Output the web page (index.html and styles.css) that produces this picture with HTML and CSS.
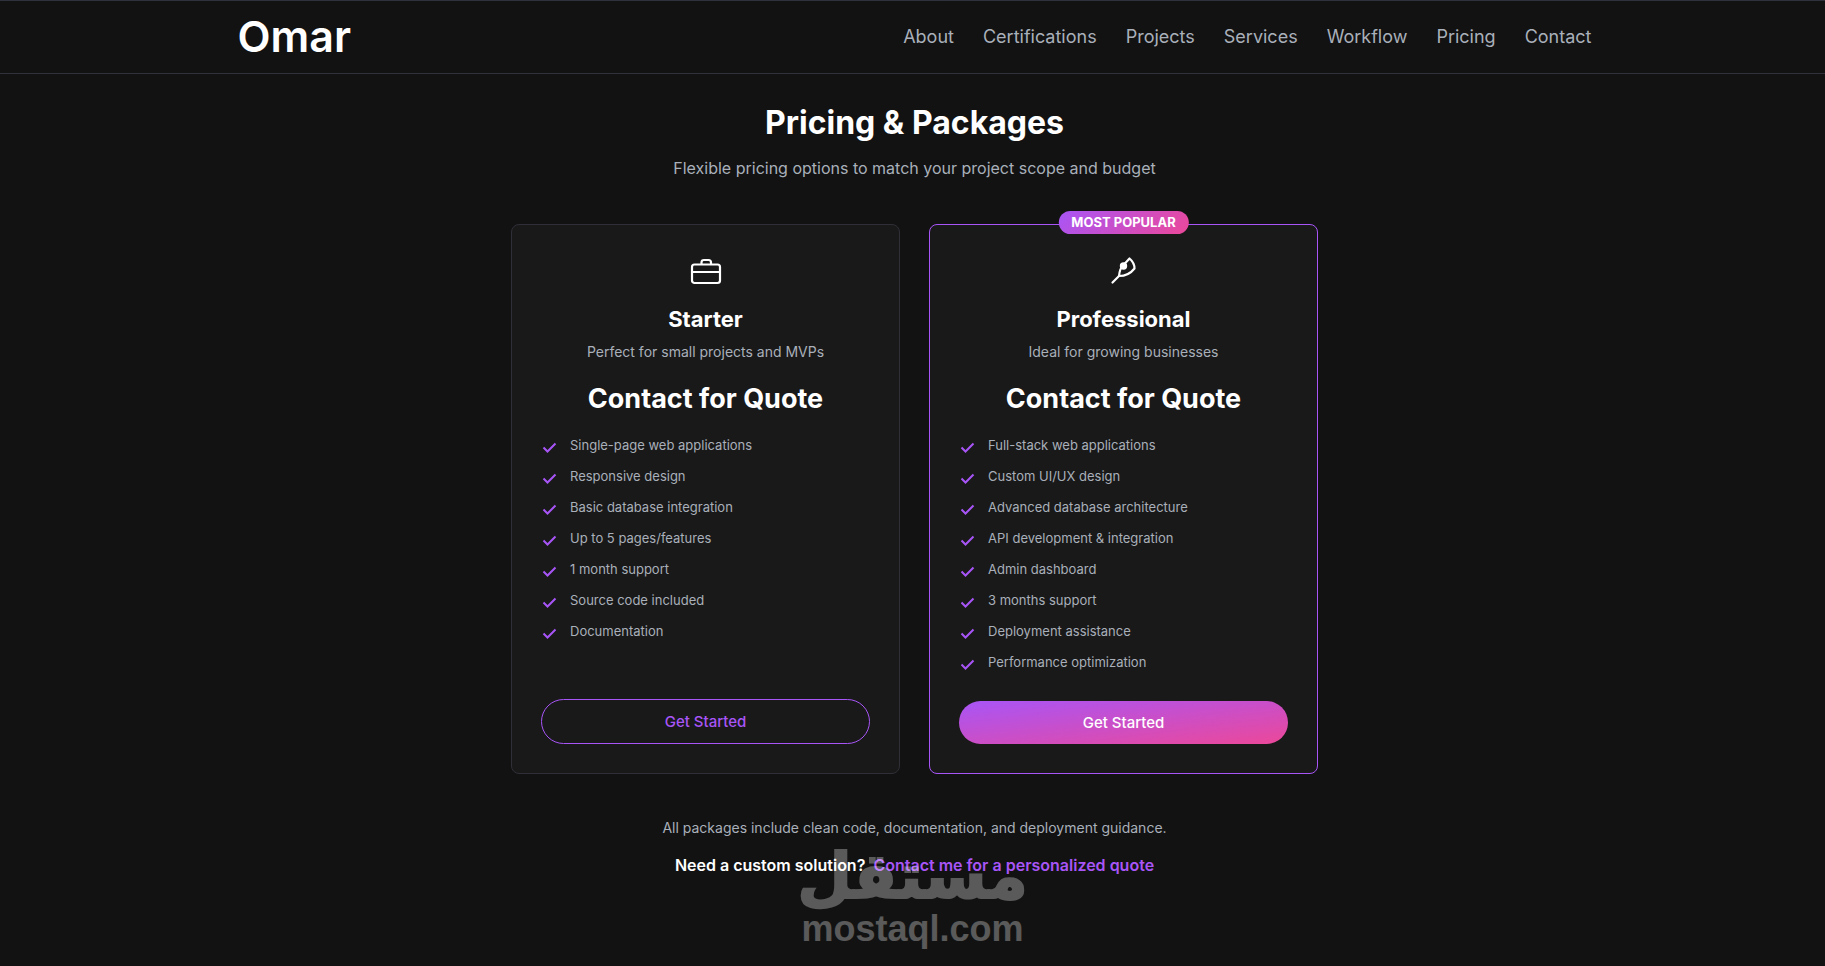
FILE: index.html
```
<!DOCTYPE html>
<html lang="en">
<head>
    <meta charset="UTF-8">
    <meta name="viewport" content="width=device-width, initial-scale=1.0">
    <title>Omar - Pricing</title>
    <link rel="stylesheet" href="styles.css">
</head>
<body>

<svg class="sprite" aria-hidden="true">
    <symbol id="check" viewBox="0 0 18 18">
        <path d="M2.500 9.500 L6.500 13.500 L14.500 5.500" fill="none" stroke="currentColor" stroke-width="2"/>
    </symbol>
</svg>

<header>
    <div class="container">
        <a class="logo" href="#home">Omar</a>
        <nav>
            <a href="#about">About</a>
            <a href="#certifications">Certifications</a>
            <a href="#projects">Projects</a>
            <a href="#services">Services</a>
            <a href="#workflow">Workflow</a>
            <a href="#pricing">Pricing</a>
            <a href="#contact">Contact</a>
        </nav>
    </div>
</header>

<main class="pricing" id="pricing">
    <h2>Pricing &amp; Packages</h2>
    <p class="subtitle">Flexible pricing options to match your project scope and budget</p>

    <div class="cards">
        <div class="card">
            <svg class="icon" viewBox="0 0 34 34" aria-hidden="true">
                <rect x="3" y="10.500" width="28" height="18.500" rx="2.500"/>
                <path d="M3 18H31M12.500 10V8.500Q12.500 6 15 6H19.500Q22 6 22 8.500V10"/>
            </svg>
            <h3>Starter</h3>
            <p class="desc">Perfect for small projects and MVPs</p>
            <div class="price">Contact for Quote</div>
            <ul class="features">
                <li><svg><use href="#check"/></svg>Single-page web applications</li>
                <li><svg><use href="#check"/></svg>Responsive design</li>
                <li><svg><use href="#check"/></svg>Basic database integration</li>
                <li><svg><use href="#check"/></svg>Up to 5 pages/features</li>
                <li><svg><use href="#check"/></svg>1 month support</li>
                <li><svg><use href="#check"/></svg>Source code included</li>
                <li><svg><use href="#check"/></svg>Documentation</li>
            </ul>
            <button class="btn btn-outline" type="button">Get Started</button>
        </div>

        <div class="card popular">
            <span class="badge">MOST POPULAR</span>
            <svg class="icon" viewBox="0 0 34 34" aria-hidden="true">
                <path d="M5.500 28.500L12 22C12.500 17 14 13 16.500 11L22.500 4.500C25.500 7 27.500 11 27.500 14.500C24 19 19 22 12 22"/>
                <circle class="dot" cx="16.500" cy="12" r="2.600"/>
            </svg>
            <h3>Professional</h3>
            <p class="desc">Ideal for growing businesses</p>
            <div class="price">Contact for Quote</div>
            <ul class="features">
                <li><svg><use href="#check"/></svg>Full-stack web applications</li>
                <li><svg><use href="#check"/></svg>Custom UI/UX design</li>
                <li><svg><use href="#check"/></svg>Advanced database architecture</li>
                <li><svg><use href="#check"/></svg>API development &amp; integration</li>
                <li><svg><use href="#check"/></svg>Admin dashboard</li>
                <li><svg><use href="#check"/></svg>3 months support</li>
                <li><svg><use href="#check"/></svg>Deployment assistance</li>
                <li><svg><use href="#check"/></svg>Performance optimization</li>
            </ul>
            <button class="btn btn-fill" type="button">Get Started</button>
        </div>
    </div>

    <p class="note">All packages include clean code, documentation, and deployment guidance.</p>
    <p class="custom">Need a custom solution? <a href="#contact">Contact me for a personalized quote</a></p>
</main>

<div class="watermark">
    <span class="watermark-ar" lang="ar" dir="rtl">مستقل</span>
    <span class="watermark-en">mostaql.com</span>
</div>

</body>
</html>
```
FILE: styles.css
```
* {
    box-sizing: border-box;
}
body {
    font-family: 'Inter', sans-serif;
    margin: 0;
    min-height: 100vh;
    position: relative;
    background-color: #121212;
    color: #fff;
}
h2, h3, p, ul {
    margin: 0;
    padding: 0;
}
a {
    text-decoration: none;
}
.sprite {
    display: none;
}

/* Header */
header {
    border-top: 1px solid #2f323c;
    border-bottom: 1px solid #2f323c;
    padding-left: 4px;
}
.container {
    max-width: 1400px;
    margin: 0 auto;
    padding: 0 23px 2px;
    height: 72px;
    display: flex;
    align-items: center;
    justify-content: space-between;
}
.logo {
    color: #fff;
    font-size: 43px;
    font-weight: 600;
}
nav {
    display: flex;
    gap: 29px;
}
nav a {
    color: #a9b0ba;
    font-size: 18px;
}
nav a:hover {
    color: #fff;
}

/* Pricing */
.pricing {
    padding: 29px 0 80px 4px;
    text-align: center;
}
.pricing h2 {
    font-size: 32px;
    line-height: 40px;
    font-weight: 700;
}
.subtitle {
    margin-top: 13px;
    font-size: 16px;
    line-height: 24px;
    color: #a9b0ba;
}
.cards {
    display: grid;
    grid-template-columns: 1fr 1fr;
    gap: 29px;
    max-width: 807px;
    margin: 44px auto 0;
}
.card {
    position: relative;
    display: flex;
    flex-direction: column;
    align-items: center;
    padding: 29px;
    background-color: #191919;
    border: 1px solid #2f2f38;
    border-radius: 8px;
}
.popular {
    border-color: #a855f7;
}
.badge {
    position: absolute;
    top: -14px;
    left: 50%;
    transform: translateX(-50%);
    padding: 0 13px;
    border-radius: 12px;
    background: linear-gradient(135deg, #a855f7, #ec4899);
    font-size: 13px;
    line-height: 23px;
    font-weight: 700;
    white-space: nowrap;
}
.icon {
    width: 34px;
    height: 34px;
    fill: none;
    stroke: #fff;
    stroke-width: 2.2;
    stroke-linecap: round;
    stroke-linejoin: round;
}
.icon .dot {
    fill: #fff;
}
.card h3 {
    margin-top: 17px;
    font-size: 22px;
    line-height: 28px;
    font-weight: 700;
}
.desc {
    margin-top: 8px;
    font-size: 14px;
    line-height: 22px;
    color: #a9b0ba;
}
.price {
    margin-top: 18px;
    font-size: 27px;
    line-height: 36px;
    font-weight: 700;
}
.features {
    align-self: stretch;
    display: flex;
    flex-direction: column;
    gap: 10px;
    margin: 18px 0 28px;
    list-style: none;
    text-align: left;
}
.features li {
    display: flex;
    gap: 11px;
    font-size: 13px;
    line-height: 21px;
    color: #a9b0ba;
}
.features svg {
    width: 18px;
    height: 18px;
    margin-top: 3px;
    color: #a855f7;
}
.btn {
    width: 100%;
    margin-top: auto;
    padding: 13px;
    border: none;
    border-radius: 24px;
    font-family: inherit;
    font-size: 15px;
    line-height: 17px;
    font-weight: 500;
    cursor: pointer;
}
.btn-outline {
    background: transparent;
    border: 1px solid #a855f7;
    color: #a855f7;
}
.btn-fill {
    background: linear-gradient(to bottom right, #a855f7, #ec4899);
    color: #fff;
}
.note {
    margin-top: 43px;
    font-size: 14px;
    line-height: 22px;
    color: #a9b0ba;
}
.custom {
    margin-top: 14px;
    font-size: 16px;
    line-height: 24px;
    font-weight: 600;
}
.custom a {
    margin-left: 4px;
    color: #a855f7;
}

/* Watermark over the bottom of the page */
.watermark {
    position: absolute;
    left: 0;
    right: 0;
    bottom: 17px;
    display: flex;
    flex-direction: column;
    align-items: center;
    color: #fff;
    opacity: 0.3;
    pointer-events: none;
}
.watermark-ar {
    font-family: 'DejaVu Sans', sans-serif;
    font-size: 63px;
    line-height: 64px;
    font-weight: 700;
    -webkit-text-stroke: 2px #fff;
}
.watermark-en {
    font-family: 'Liberation Sans', sans-serif;
    font-size: 36px;
    line-height: 40px;
    font-weight: 700;
}
```
